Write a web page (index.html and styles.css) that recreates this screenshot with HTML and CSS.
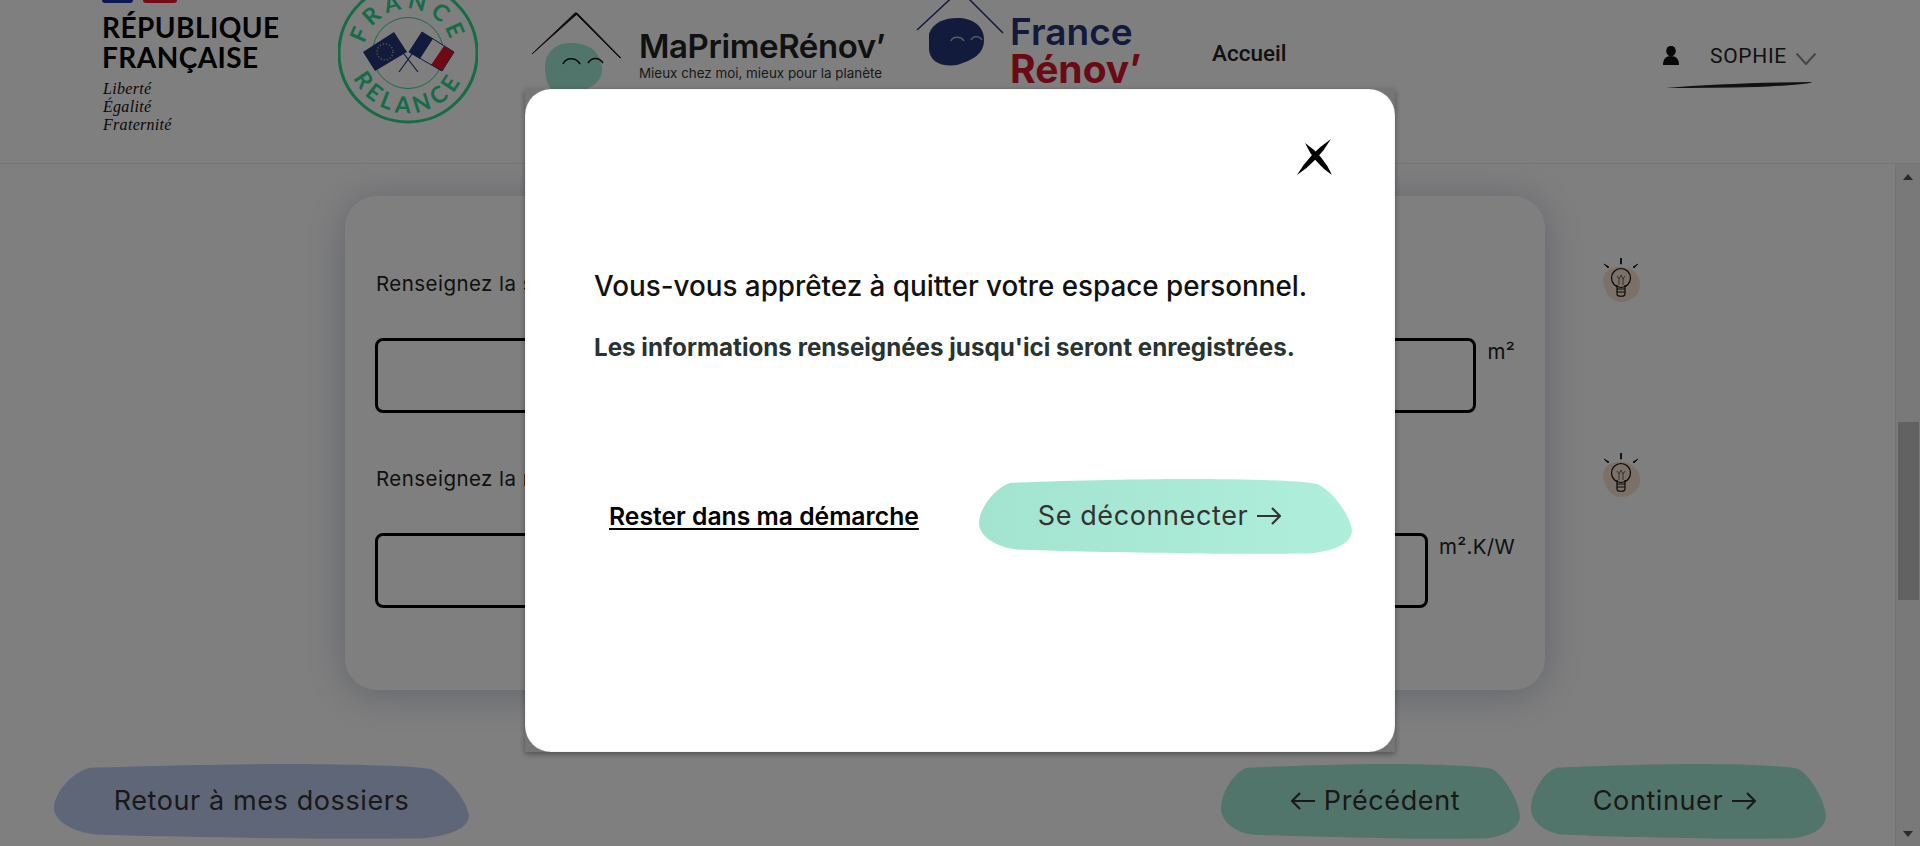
FILE: index.html
```html
<!DOCTYPE html>
<html lang="fr">
<head>
<meta charset="utf-8">
<title>MaPrimeRénov'</title>
<link rel="stylesheet" href="styles.css">
</head>
<body>
<header class="header">
  <div class="marianne">
    <div class="flag-bits"><span class="bit-blue"></span><span class="bit-red"></span></div>
    <div class="rf">RÉPUBLIQUE<br>FRANÇAISE</div>
    <div class="devise">Liberté<br>Égalité<br>Fraternité</div>
  </div>
  <svg class="relance" viewBox="338 0 140 124" aria-label="France Relance">
    <defs>
      <path id="arcTop" d="M364 53 A44 44 0 0 1 452 53"/>
      <path id="arcBottom" d="M348 53 A60 60 0 0 0 468 53"/>
    </defs>
    <circle cx="408" cy="53" r="69" fill="none" stroke="#2ad88c" stroke-width="3"/>
    <circle cx="408" cy="53" r="35.500" fill="none" stroke="#2ad88c" stroke-width="1"/>
    <text class="arc-text"><textPath href="#arcTop" startOffset="50%" text-anchor="middle">FRANCE</textPath></text>
    <text class="arc-text"><textPath href="#arcBottom" startOffset="50%" text-anchor="middle">RELANCE</textPath></text>
    <path d="M412 54 L399 72 M404 54 L418 72" stroke="#243678" stroke-width="1.200"/>
    <path d="M363 52 L394 32 L407 52 L375 71 Z" fill="#243678"/>
    <circle cx="385" cy="52" r="8" fill="none" stroke="#e0c040" stroke-width="1.500" stroke-dasharray="1 2.200"/>
    <path d="M422 32 L409 52 L420 59 L433 39 Z" fill="#243678"/>
    <path d="M433 39 L420 59 L431 65 L444 46 Z" fill="#fff"/>
    <path d="M444 46 L431 65 L442 71 L454 52 Z" fill="#e2132a"/>
    <path d="M422 32 L454 52 L442 71 L409 52 Z" fill="none" stroke="#243678" stroke-width="1"/>
  </svg>
  <div class="brand brand-mpr">
    <svg class="brand-mark" viewBox="0 0 92 92">
      <path d="M15 65 C16 52 26 43 40 43 C58 43 70 50 72 68 C73 82 60 90 45 92 L25 92 C18 88 15 80 15 65 Z" fill="#a5ead6"/>
      <path d="M2 54 L45 13 L47 14 Z M45 13 L47 13 L91 58 L89 57 Z" fill="#1a1a1a" stroke="#1a1a1a" stroke-width=".9"/>
      <path d="M33 64 C36 57 46 57 50 64 M58 63 C62 57 69 57 73 63" fill="none" stroke="#111" stroke-width="1.600"/>
    </svg>
    <div class="brand-text">
      <div class="mpr-name">MaPrimeRénov’</div>
      <div class="mpr-sub">Mieux chez moi, mieux pour la planète</div>
    </div>
  </div>
  <div class="brand brand-fr">
    <svg class="brand-mark fr-mark" viewBox="0 0 90 92">
      <path d="M14 34 C18 22 30 18 42 18 C58 18 69 26 69 40 C69 54 58 60 42 65 C26 67 14 62 14 48 Z" fill="#243678"/>
      <path d="M2 30 L45 -10 M45 -10 L88 33" fill="none" stroke="#243678" stroke-width="1.500"/>
      <path d="M36 41 C38 36 46 36 49 41 M56 40 C58 36 64 35 67 40" fill="none" stroke="#bbb" stroke-width="1.400"/>
    </svg>
    <div class="fr-text">
      <div class="fr-top">France</div>
      <div class="fr-bottom">Rénov’</div>
    </div>
  </div>
  <nav class="nav">Accueil</nav>
  <div class="user">
    <div class="user-row">
      <svg class="user-icon" viewBox="0 0 16 19"><ellipse cx="8" cy="5" rx="4.800" ry="5.200" fill="#111"/><path d="M0 19 C0 13 3 10 8 10 C13 10 16 13 16 19 Z" fill="#111"/></svg>
      <span class="user-name">SOPHIE</span>
      <svg class="user-chevron" viewBox="0 0 20 12"><path d="M.5 .5 L10 11 L19.500 .5" fill="none" stroke="#8a8a8a" stroke-width="2"/></svg>
    </div>
    <svg class="swoosh" viewBox="0 0 146 6"><path d="M0 6 C40 2.500 90 .5 146 0 C146 1.500 120 4 90 5 C60 5.800 30 6 0 6 Z" fill="#222"/></svg>
  </div>
</header>

<div class="body-row">
  <main class="content">
    <section class="card">
      <div class="field">
        <div class="field-head">
          <span class="label">Renseignez la surface de la paroi isolée</span>
          <svg class="bulb" viewBox="0 0 37 44"><use href="#bulb-art"/></svg>
        </div>
        <div class="field-row"><div class="input"></div><span class="unit">m²</span></div>
      </div>
      <div class="field">
        <div class="field-head">
          <span class="label">Renseignez la résistance thermique de l'isolant</span>
          <svg class="bulb" viewBox="0 0 37 44"><use href="#bulb-art"/></svg>
        </div>
        <div class="field-row"><div class="input"></div><span class="unit">m².K/W</span></div>
      </div>
    </section>
    <div class="actions">
      <a class="blob-btn btn-back">
        <svg class="blob" viewBox="0 0 100 100" preserveAspectRatio="none"><path d="M8.500 5 C25 2 45 0 55 0 C70 0 85 2 90 6 C93 8 99 40 100 68 C100 85 96 95 89 99 C80 100 65 100 55 99 C40 98 20 96 10 94 C4 90 0 75 0 59 C0 40 4 12 8.500 5 Z"/></svg>
        <span class="blob-label">Retour à mes dossiers</span>
      </a>
      <div class="actions-right">
        <a class="blob-btn btn-prev">
          <svg class="blob" viewBox="0 0 100 100" preserveAspectRatio="none"><path d="M8.500 5 C25 2 45 0 55 0 C70 0 85 2 90 6 C93 8 99 40 100 68 C100 85 96 95 89 99 C80 100 65 100 55 99 C40 98 20 96 10 94 C4 90 0 75 0 59 C0 40 4 12 8.500 5 Z"/></svg>
          <span class="blob-label"><svg class="arrow" viewBox="0 0 24 18"><path d="M24 9 H1 M9 1 L1 9 L9 17" fill="none" stroke="currentColor" stroke-width="2.200"/></svg>Précédent</span>
        </a>
        <a class="blob-btn btn-next">
          <svg class="blob" viewBox="0 0 100 100" preserveAspectRatio="none"><path d="M8.500 5 C25 2 45 0 55 0 C70 0 85 2 90 6 C93 8 99 40 100 68 C100 85 96 95 89 99 C80 100 65 100 55 99 C40 98 20 96 10 94 C4 90 0 75 0 59 C0 40 4 12 8.500 5 Z"/></svg>
          <span class="blob-label">Continuer<svg class="arrow" viewBox="0 0 24 18"><path d="M0 9 H23 M15 1 L23 9 L15 17" fill="none" stroke="currentColor" stroke-width="2.200"/></svg></span>
        </a>
      </div>
    </div>
  </main>
  <aside class="scrollbar">
    <span class="sb-up"></span>
    <span class="sb-thumb"></span>
    <span class="sb-down"></span>
  </aside>
</div>

<svg class="defs" width="0" height="0">
  <defs>
    <g id="bulb-art">
      <path d="M0 22 C1 12 10 8 20 9 C31 10 37 18 37 27 C37 37 28 44 18 44 C8 44 1 34 0 22 Z" fill="#f6e2d0"/>
      <path d="M17.500 0 L18.500 0 L18.500 6 L17.500 6 Z M1 6 L6 9 L5 10 Z M31 10 L30 9 L35 6 Z" fill="#111" stroke="#111" stroke-width=".8"/>
      <circle cx="18" cy="20" r="9.500" fill="none" stroke="#111" stroke-width="1.200"/>
      <path d="M14 27 V36 C14 39 22 39 22 36 V27 M14 31 H22 M14 34 H22" fill="none" stroke="#111" stroke-width="1.200"/>
      <path d="M14 18 L16 21 L18 17 L20 21 L22 18 M16 21 V27 M20 21 V27" fill="none" stroke="#444" stroke-width=".8"/>
    </g>
  </defs>
</svg>

<div class="backdrop"></div>
<div class="modal" role="dialog">
  <div class="modal-inner">
    <div class="modal-close">
      <svg class="close-x" viewBox="0 0 36 36"><path d="M0 36 Q13 14 34 0 Q21 22 0 36 Z" fill="#000"/><path d="M8 4 Q17 24 35 36 Q26 16 8 4 Z" fill="#000"/></svg>
    </div>
    <h2 class="modal-title">Vous-vous apprêtez à quitter votre espace personnel.</h2>
    <p class="modal-body">Les informations renseignées jusqu'ici seront enregistrées.</p>
    <div class="modal-actions">
      <a class="modal-link">Rester dans ma démarche</a>
      <a class="blob-btn btn-logout">
        <svg class="blob" viewBox="0 0 100 100" preserveAspectRatio="none">
          <defs><linearGradient id="mint"><stop offset="0" stop-color="#a3e4d1"/><stop offset="1" stop-color="#aeeeda"/></linearGradient></defs>
          <path fill="url(#mint)" d="M8.500 5 C25 2 45 0 55 0 C70 0 85 2 90 6 C93 8 99 40 100 68 C100 85 96 95 89 99 C80 100 65 100 55 99 C40 98 20 96 10 94 C4 90 0 75 0 59 C0 40 4 12 8.500 5 Z"/>
        </svg>
        <span class="blob-label">Se déconnecter<svg class="arrow" viewBox="0 0 24 18"><path d="M0 9 H23 M15 1 L23 9 L15 17" fill="none" stroke="currentColor" stroke-width="2.200"/></svg></span>
      </a>
    </div>
  </div>
</div>
</body>
</html>
```
FILE: styles.css
```css
* { box-sizing: border-box; }
html, body { margin: 0; height: 100%; }
body {
  width: 1920px;
  height: 846px;
  overflow: hidden;
  background: #fff;
  color: #222;
  font-family: "Inter", "Liberation Sans", sans-serif;
}

/* Header */
.header {
  display: flex;
  align-items: flex-start;
  height: 164px;
  padding: 0 103px 0 102px;
  border-bottom: 1px solid #eaeaea;
  background: #fff;
}
.marianne { width: 178px; flex: none; }
.flag-bits { display: flex; gap: 10px; height: 3px; }
.bit-blue { width: 31px; background: #1d2fa8; border-radius: 0 0 10px 10px; }
.bit-red { width: 34px; background: #e8142a; border-radius: 0 0 6px 6px; }
.rf {
  margin-top: 9px;
  font-family: "Lato", sans-serif;
  font-weight: 700;
  font-size: 28px;
  line-height: 30px;
  color: #000;
  white-space: nowrap;
  letter-spacing: .45px;
}
.devise {
  margin-top: 8px;
  font-family: "Liberation Serif", serif;
  font-style: italic;
  font-size: 16px;
  line-height: 18px;
  color: #111;
  padding-left: 1px;
  letter-spacing: .3px;
}
.relance { width: 140px; height: 124px; flex: none; margin-left: 58px; }
.arc-text { font-family: "Lato", sans-serif; font-weight: 700; font-size: 23px; letter-spacing: 5px; fill: #2ad88c; }
.brand { display: flex; flex: none; align-items: flex-start; }
.brand-mpr { margin-left: 52px; width: 360px; }
.brand-mark { width: 92px; height: 92px; flex: none; }
.brand-text { margin-left: 17px; padding-top: 26px; }
.mpr-name { font-weight: 600; font-size: 33px; line-height: 40px; color: #222; white-space: nowrap; letter-spacing: -.4px; }
.mpr-sub { margin-top: -2px; font-size: 13.400px; line-height: 18px; color: #333; white-space: nowrap; }
.brand-fr { margin-left: 25px; width: 230px; }
.fr-mark { width: 90px; }
.fr-text { margin-left: 5px; padding-top: 13px; }
.fr-top { font-weight: 600; font-size: 37px; line-height: 38px; color: #243678; }
.fr-bottom { font-weight: 700; font-size: 39px; line-height: 36px; color: #d3142b; }
.nav {
  margin-left: 67px;
  padding-top: 40px;
  font-family: "Roboto", sans-serif;
  font-weight: 500;
  font-size: 22.500px;
  line-height: 26px;
  color: #222;
}
.user { margin-left: auto; padding-top: 46px; width: 154px; }
.user-row { display: flex; align-items: flex-start; }
.user-icon { width: 16px; height: 19px; flex: none; }
.user-name { margin-left: 31px; font-family: "Roboto", sans-serif; font-size: 21px; line-height: 20px; color: #222; letter-spacing: .7px; white-space: nowrap; }
.user-chevron { width: 20px; height: 12px; margin: 7px 0 0 9px; flex: none; }
.swoosh { display: block; width: 146px; height: 6px; margin: 16px 0 0 3px; }

/* Body */
.body-row { display: flex; height: 682px; }
.content { flex: 1; min-width: 0; padding: 32px 0 0 0; }
.scrollbar {
  width: 25px;
  flex: none;
  position: relative;
  background: #f2f2f2;
  border-left: 1px solid #e8e8e8;
  display: flex;
  flex-direction: column;
  align-items: center;
}
.sb-up, .sb-down {
  width: 0; height: 0;
  border-left: 5.500px solid transparent;
  border-right: 5.500px solid transparent;
}
.sb-up { border-bottom: 6px solid #555; margin-top: 10px; }
.sb-thumb { width: 21px; height: 178px; margin-top: 242px; background: #c4c4c4; }
.sb-down { border-top: 6px solid #555; margin-top: 231px; }

.card {
  width: 1200px;
  height: 494px;
  margin-left: 345px;
  padding: 62px 30px 0 30px;
  background: #fff;
  border-radius: 32px;
  box-shadow: 0 4px 40px rgba(70, 85, 130, .32);
  display: flex;
  flex-direction: column;
  gap: 40px;
}
.field { display: flex; flex-direction: column; gap: 36px; }
.field-head { display: flex; justify-content: space-between; align-items: center; height: 44px; }
.label { font-size: 20.500px; line-height: 26px; color: #222; padding: 8px 0 0 1px; white-space: nowrap; letter-spacing: .45px; }
.bulb { width: 37px; height: 44px; margin-right: -125px; flex: none; }
.field-row { display: flex; gap: 11px; }
.input { flex: 1; height: 75px; border: 3px solid #000; border-radius: 8px; background: #fff; }
.unit { font-size: 20.500px; line-height: 26px; color: #222; padding-top: 1px; letter-spacing: .3px; }

/* Buttons */
.actions {
  display: flex;
  justify-content: space-between;
  margin-top: 74px;
  padding: 0 69px 0 54px;
}
.actions-right { display: flex; gap: 11px; }
.blob-btn {
  position: relative;
  display: flex;
  align-items: center;
  justify-content: center;
  height: 75px;
  flex: none;
  color: #333;
}
.blob { position: absolute; inset: 0; width: 100%; height: 100%; }
.blob-label {
  position: relative;
  display: flex;
  align-items: center;
  gap: 9px;
  padding-bottom: 1px;
  font-size: 27px;
  line-height: 30px;
  letter-spacing: .6px;
  white-space: nowrap;
}
.arrow { width: 24px; height: 18px; flex: none; }
.btn-back { width: 415px; }
.btn-back .blob { fill: #bfccf0; }
.btn-prev { width: 299px; padding-left: 10px; }
.btn-next { width: 295px; padding-right: 8px; }
.btn-prev .blob, .btn-next .blob { fill: #a5ead6; }

/* Modal */
.backdrop { position: fixed; inset: 0; background: rgba(0, 0, 0, .5); }
.modal {
  position: fixed;
  left: 525px;
  top: 89px;
  width: 870px;
  height: 663px;
  background: rgba(0, 0, 0, .08);
  box-shadow: 0 2px 6px rgba(0, 0, 0, .4);
}
.modal-inner {
  height: 100%;
  padding: 50px 62px 0 69px;
  background: #fff;
  border-radius: 26px;
  box-shadow: inset 0 0 1px rgba(0, 0, 0, .4);
}
.modal-close { display: flex; justify-content: flex-end; }
.close-x { width: 36px; height: 36px; display: block; }
.modal-title {
  margin: 93px 0 0;
  font-weight: 500;
  font-size: 27.800px;
  line-height: 36px;
  color: #111;
  white-space: nowrap;
}
.modal-body {
  margin: 29px 0 0;
  font-weight: 700;
  font-size: 24.200px;
  line-height: 30px;
  color: #29332f;
  white-space: nowrap;
}
.modal-actions {
  display: flex;
  align-items: center;
  justify-content: space-between;
  margin: 116px -19px 0 15px;
}
.modal-link {
  font-weight: 600;
  font-size: 24.700px;
  line-height: 30px;
  color: #000;
  text-decoration: underline;
  text-underline-offset: 3px;
  white-space: nowrap;
  padding-bottom: 2px;
}
.btn-logout { width: 373px; padding-right: 12px; }
.defs { position: absolute; }
```
